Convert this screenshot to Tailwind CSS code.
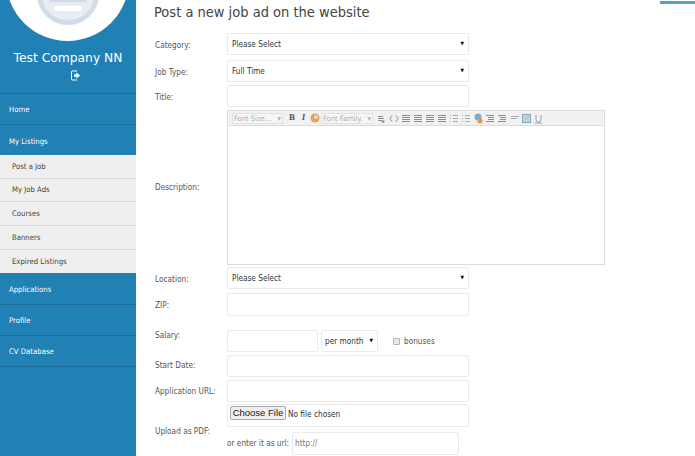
<!DOCTYPE html>
<html lang="en">
  <head>
    <meta charset="UTF-8" />
    <title>Post a new job ad</title>
    <script src="https://cdn.jsdelivr.net/npm/@tailwindcss/browser@4"></script>
  </head>
  <body class="bg-white h-[456px] w-[695px] overflow-hidden font-['DejaVu_Sans_Condensed','DejaVu_Sans',sans-serif] [font-stretch:condensed] text-[8.200px] text-[#555]">
    <div class="flex h-[456px]">
      <!-- sidebar -->
      <aside class="w-[136px] h-full bg-[#2180b4] text-white shrink-0 overflow-hidden">
        <div class="h-[94px] border-b border-[#1b6c99] flex flex-col items-center">
          <div class="w-[123px] h-[41px] overflow-hidden -ml-[1px]">
            <div class="w-[123px] h-[123px] -mt-[82px] rounded-full bg-white flex justify-center items-end pb-[16px]">
              <svg width="62" height="62" viewBox="0 0 62 62">
                <circle cx="31" cy="31" r="31" fill="#d0dce8" />
                <ellipse cx="31" cy="35" rx="25" ry="22" fill="#e8edf3" />
                <path d="M15 33h32l3 6H12z" fill="#cfdae6" />
                <rect x="17" y="43" width="28" height="5" rx="2" fill="#fff" />
              </svg>
            </div>
          </div>
          <div class="mt-[9px] font-['DejaVu_Sans',sans-serif] [font-stretch:normal] text-[12.300px] leading-[16px] whitespace-nowrap">Test Company NN</div>
          <svg class="mt-[4px] ml-[15px]" width="9" height="11" viewBox="0 0 9 11">
            <path d="M6 1H1.500a1 1 0 0 0-1 1v7a1 1 0 0 0 1 1H6" fill="none" stroke="#fff" stroke-width="1" />
            <path d="M3 4.200h2.500V2.400L9 5.500 5.500 8.600V6.800H3z" fill="#fff" />
          </svg>
        </div>
        <nav class="text-[7.700px]">
          <a class="flex items-center h-[31px] pl-[9px] pt-[2px] border-b border-[#1b6c99]">Home</a>
          <a class="flex items-center h-[30px] pl-[9px] pt-[3px]">My Listings</a>
          <ul class="bg-[#efefef] text-[#444]">
            <li class="flex items-center h-[23.700px] pl-[12px] border-b border-[#d8d8d8]">Post a Job</li>
            <li class="flex items-center h-[23.700px] pl-[12px] border-b border-[#d8d8d8]">My Job Ads</li>
            <li class="flex items-center h-[23.700px] pl-[12px] border-b border-[#d8d8d8]">Courses</li>
            <li class="flex items-center h-[23.700px] pl-[12px] border-b border-[#d8d8d8]">Banners</li>
            <li class="flex items-center h-[23.700px] pl-[12px]">Expired Listings</li>
          </ul>
          <a class="flex items-center h-[32px] pl-[9px] pt-[2px] border-b border-[#1b6c99]">Applications</a>
          <a class="flex items-center h-[31px] pl-[9px] border-b border-[#1b6c99]">Profile</a>
          <a class="flex items-center h-[31px] pl-[9px] border-b border-[#1b6c99]">CV Database</a>
        </nav>
      </aside>

      <!-- main -->
      <main class="relative flex-1 pl-[18px]">
        <div class="absolute right-0 top-[1px] w-[35px] h-[3px] bg-[#5a9fcb]"></div>
        <h1 class="text-[14.500px] leading-[20px] pt-[2px] text-[#444]">Post a new job ad on the website</h1>
        <form class="mt-[11px] flex flex-col pl-[1px] whitespace-nowrap">
          <div class="flex items-center h-[22px]">
            <label class="w-[72px] pt-[2px]">Category:</label>
            <div class="w-[242px] h-full border border-[#eaeaea] rounded-[2px] flex items-center justify-between pl-[4px] pr-[4px] text-[#333]">
              <span class="pt-[1px]">Please Select</span><span class="text-[5px] text-black">▼</span>
            </div>
          </div>
          <div class="flex items-center h-[22px] mt-[5px]">
            <label class="w-[72px] pt-[2px]">Job Type:</label>
            <div class="w-[242px] h-full border border-[#eaeaea] rounded-[2px] flex items-center justify-between pl-[4px] pr-[4px] text-[#333]">
              <span class="pt-[1px]">Full Time</span><span class="text-[5px] text-black">▼</span>
            </div>
          </div>
          <div class="flex h-[22px] mt-[3px]">
            <label class="w-[72px] pt-[6px]">Title:</label>
            <input class="w-[242px] h-full border border-[#eaeaea] rounded-[2px]" />
          </div>

          <div class="flex items-center h-[155px] mt-[3px]">
            <label class="w-[72px]">Description:</label>
            <div class="w-[378px] h-full border border-[#dcdcdc] flex flex-col">
              <div class="h-[15px] bg-[#f1f1f1] border-b border-[#dcdcdc] flex items-center pl-[4px] text-[7.500px] text-[#b0b0b0]">
                <span class="w-[51px] border border-[#e2e2e2] bg-[#f6f6f6] h-[11px] leading-[10px] px-[1px] flex justify-between">Font Size...<span>▾</span></span>
                <span class="w-[14px] text-center font-['Liberation_Serif',serif] font-bold text-[9px] text-[#555] ml-[2px]">B</span>
                <span class="w-[9px] text-center font-['Liberation_Serif',serif] italic font-bold text-[9px] text-[#555]">I</span>
                <svg class="ml-[2px]" width="10" height="10" viewBox="0 0 10 10"><circle cx="5" cy="5" r="4.500" fill="#e3a25f" /><circle cx="6" cy="4" r="2" fill="#f3dcb0" /></svg>
                <span class="ml-[1px] w-[52px] border border-[#e2e2e2] bg-[#f6f6f6] h-[11px] leading-[10px] px-[1px] flex justify-between">Font Family.<span>▾</span></span>
                <svg class="ml-[4px]" width="166" height="11" viewBox="0 0 166 11">
                  <g fill="none" stroke="#8b8f94" stroke-width="1">
                    <path d="M1 3.500h5M1 5.500h6M1 7.500h4" />
                    <path d="M15 2.500l-2 3 2 3M19 2.500l2 3-2 3" />
                    <path d="M25 2.500h8M25 4.500h8M25 6.500h8M25 8.500h8" />
                    <path d="M37 2.500h8M37 4.500h8M37 6.500h8M37 8.500h8" />
                    <path d="M49 2.500h8M49 4.500h8M49 6.500h8M49 8.500h8" />
                    <path d="M61 2.500h8M61 4.500h8M61 6.500h8M61 8.500h8" />
                    <path d="M76 2.500h5M76 5.500h5M76 8.500h5M73 2.500h1M73 5.500h1M73 8.500h1" stroke="#a9adb2" />
                    <path d="M88 2.500h5M88 5.500h5M88 8.500h5M85 2.500h1M85 5.500h1M85 8.500h1" stroke="#a9adb2" />
                    <path d="M109 2.500h8M111 4.500h6M111 6.500h6M109 8.500h8" />
                    <path d="M121 2.500h8M123 4.500h6M123 6.500h6M121 8.500h8" />
                    <path d="M134 3.500h8M134 5.500h6" stroke="#a9adb2" />
                    <path d="M159 2v4.500a2.500 2.500 0 0 0 5 0V2M158 10h7" stroke="#9a9ea3" />
                  </g>
                  <circle cx="101" cy="4" r="3.500" fill="#7fa9cf" />
                  <circle cx="103" cy="8" r="2.500" fill="#e09a3f" />
                  <circle cx="6" cy="8.500" r="1.500" fill="#8fb04f" />
                  <rect x="145.500" y="1.500" width="8" height="8" fill="#bcd5ec" stroke="#7fa9cf" />
                  <path d="M148 7l4-4" stroke="#e0b040" />
                </svg>
              </div>
              <div class="flex-1"></div>
            </div>
          </div>

          <div class="flex items-center h-[22px] mt-[2px]">
            <label class="w-[72px] pt-[2px]">Location:</label>
            <div class="w-[242px] h-full border border-[#eaeaea] rounded-[2px] flex items-center justify-between pl-[4px] pr-[4px] text-[#333]">
              <span class="pt-[1px]">Please Select</span><span class="text-[5px] text-black">▼</span>
            </div>
          </div>
          <div class="flex items-center h-[23px] mt-[4px]">
            <label class="w-[72px] pt-[2px]">ZIP:</label>
            <input class="w-[242px] h-full border border-[#eaeaea] rounded-[2px]" />
          </div>
          <div class="flex h-[22px] mt-[14px]">
            <label class="w-[72px] -mt-[1px]">Salary:</label>
            <input class="w-[91px] h-full border border-[#eaeaea] rounded-[2px]" />
            <div class="ml-[3px] w-[57px] h-full border border-[#eaeaea] rounded-[2px] flex items-center justify-between pl-[3px] pr-[4px] text-[#333]">
              <span class="pt-[1px]">per month</span><span class="text-[5px] text-black">▼</span>
            </div>
            <div class="ml-[15px] flex items-center gap-[4px] h-full">
              <span class="w-[7px] h-[7px] border border-[#b5b5b5] bg-[#e8e8e8] rounded-[1px]"></span>
              <span>bonuses</span>
            </div>
          </div>
          <div class="flex items-center h-[22px] mt-[3px]">
            <label class="w-[72px] -mt-[1px]">Start Date:</label>
            <input class="w-[242px] h-full border border-[#eaeaea] rounded-[2px]" />
          </div>
          <div class="flex items-center h-[22px] mt-[3px]">
            <label class="w-[72px] pt-[1px]">Application URL:</label>
            <input class="w-[242px] h-full border border-[#eaeaea] rounded-[2px]" />
          </div>
          <div class="flex mt-[2px]">
            <label class="w-[72px] self-center mt-[3px]">Upload as PDF:</label>
            <div class="flex flex-col">
              <div class="w-[242px] h-[23px] border border-[#eaeaea] rounded-[2px] flex items-start pl-[2px]">
                <span class="h-[14px] mt-[1px] w-[56px] text-center leading-[12px] border border-[#aaa] rounded-[2px] bg-[#eee] text-[#222] font-['Liberation_Sans',sans-serif] [font-stretch:normal] text-[9.500px]">Choose File</span>
                <span class="ml-[2px] mt-[3px] text-[#333]">No file chosen</span>
              </div>
              <div class="flex items-center mt-[5px] h-[23px]">
                <span class="w-[65px]">or enter it as url:</span>
                <div class="w-[167px] h-full border border-[#eaeaea] rounded-[2px] flex items-center pl-[2px] text-[#777]">http://</div>
              </div>
            </div>
          </div>
        </form>
      </main>
    </div>
  </body>
</html>
